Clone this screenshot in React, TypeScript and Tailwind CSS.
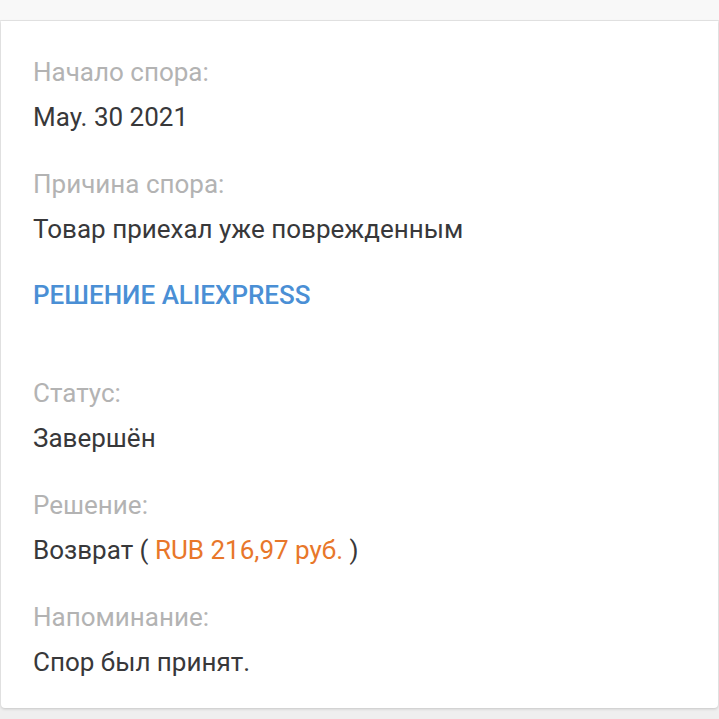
import React from "react";

const font = { fontFamily: "Roboto, 'Noto Sans', sans-serif" };

function Field({ label, children, first }: { label: string; children: React.ReactNode; first?: boolean }) {
  return (
    <div className={first ? "" : "mt-[37px]"}>
      <div className="text-[26px] leading-[30px] text-[#b3b3b3]">{label}</div>
      <div className="mt-[15px] text-[26px] leading-[30px] text-[#38383a]">{children}</div>
    </div>
  );
}

export default function App() {
  return (
    <div className="w-[719px] h-[719px] bg-[#efefef] overflow-hidden" style={font}>
      <div className="h-[21px] bg-[#f8f8f8] border-b border-[#e6e6e6]" />
      <div className="mx-[1px] bg-white rounded-b-[4px] shadow-[0_1px_3px_rgba(0,0,0,0.18)] pl-[32px] pt-[36px] pb-[31px]">
        <Field label="Начало спора:" first>May. 30 2021</Field>
        <Field label="Причина спора:">Товар приехал уже поврежденным</Field>
        <div className="mt-[36px] text-[26px] leading-[30px] font-medium text-[#4a8fd5]">РЕШЕНИЕ ALIEXPRESS</div>
        <div className="mt-[68px]">
          <Field label="Статус:" first>Завершён</Field>
          <Field label="Решение:">
            Возврат ( <span className="text-[#e8772a]">RUB 216,97 руб.</span> )
          </Field>
          <Field label="Напоминание:">Спор был принят.</Field>
        </div>
      </div>
    </div>
  );
}
